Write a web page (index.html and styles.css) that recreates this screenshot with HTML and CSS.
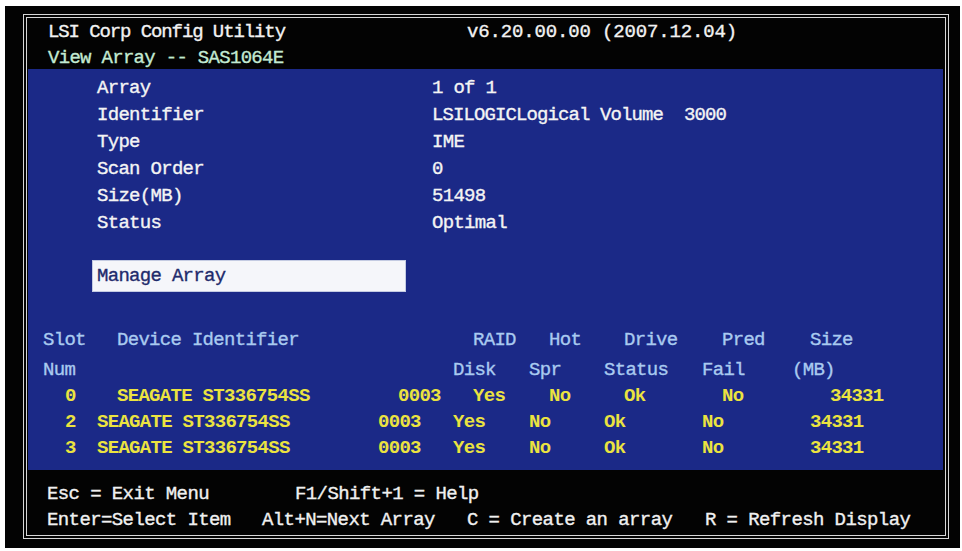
FILE: index.html
```html
<!DOCTYPE html>
<html lang="en">
<head>
  <meta charset="UTF-8">
  <title>LSI Corp Config Utility - View Array</title>
  <link rel="stylesheet" href="styles.css">
</head>
<body>

<div class="screen">
  <div class="frame">

    <div class="head">
      <div class="line">
        <span class="title">LSI Corp Config Utility</span>
        <span class="version">v6.20.00.00 (2007.12.04)</span>
      </div>
      <div class="line sub"><span>View Array -- SAS1064E</span></div>
    </div>

    <div class="panel">
      <div class="info">
        <div class="row"><span class="label">Array</span><span class="value">1 of 1</span></div>
        <div class="row"><span class="label">Identifier</span><span class="value tight">LSILOGICLogical Volume  3000</span></div>
        <div class="row"><span class="label">Type</span><span class="value">IME</span></div>
        <div class="row"><span class="label">Scan Order</span><span class="value">0</span></div>
        <div class="row"><span class="label">Size(MB)</span><span class="value">51498</span></div>
        <div class="row"><span class="label">Status</span><span class="value">Optimal</span></div>
      </div>

      <div class="menu-item">Manage Array</div>

      <div class="devices">
        <div class="trow thead first">
          <span>Slot</span><span class="ind">Device Identifier</span><span></span>
          <span class="ind">RAID</span><span class="ind">Hot</span><span class="ind">Drive</span>
          <span class="ind">Pred</span><span class="sz">Size</span>
        </div>
        <div class="trow thead">
          <span>Num</span><span></span><span></span>
          <span>Disk</span><span>Spr</span><span>Status</span>
          <span>Fail</span><span>(MB)</span>
        </div>
        <div class="trow disk">
          <span class="num">0</span><span class="ind">SEAGATE ST336754SS</span><span class="ind">0003</span>
          <span class="ind">Yes</span><span class="ind">No</span><span class="ind">Ok</span>
          <span class="ind">No</span><span class="sz2">34331</span>
        </div>
        <div class="trow disk">
          <span class="num">2</span><span>SEAGATE ST336754SS</span><span>0003</span>
          <span>Yes</span><span>No</span><span>Ok</span>
          <span>No</span><span class="sz">34331</span>
        </div>
        <div class="trow disk">
          <span class="num">3</span><span>SEAGATE ST336754SS</span><span>0003</span>
          <span>Yes</span><span>No</span><span>Ok</span>
          <span>No</span><span class="sz">34331</span>
        </div>
      </div>
    </div>

    <div class="foot">
      <div class="line">
        <span class="k1">Esc = Exit Menu</span>
        <span>F1/Shift+1 = Help</span>
      </div>
      <div class="line">
        <span class="k2">Enter=Select Item</span>
        <span class="k3">Alt+N=Next Array</span>
        <span class="k4">C = Create an array</span>
        <span>R = Refresh Display</span>
      </div>
    </div>

  </div>
</div>

</body>
</html>
```

FILE: styles.css
```css
body {
  margin: 0;
  background-color: #fff;
  font-family: "Liberation Mono", "DejaVu Sans Mono", monospace;
  font-size: 19px;
  letter-spacing: -0.7px;
  -webkit-text-stroke: 0.35px currentColor;
}

.line span,
.row span,
.trow span,
.menu-item {
  white-space: pre;
}

.screen {
  margin: 6px 0 0 5px;
  width: 955px;
  height: 542px;
  box-sizing: border-box;
  padding: 8px 11px 0 18px;
  background-color: #030303;
}

.frame {
  border: 4px double #d6d6d6;
}

/* black title area */
.head {
  height: 51px;
  box-sizing: border-box;
  padding: 1px 0 0 21px;
  color: #f2f2f2;
}

.line {
  display: flex;
  line-height: 26px;
}

.title {
  width: 419px;
  letter-spacing: -1.1px;
}

.version {
  letter-spacing: -0.15px;
}

.sub {
  color: #c3ead2;
}

/* blue area */
.panel {
  margin: 0 2px 0 1px;
  padding: 6px 0 9px 0;
  background-color: #1b2987;
  color: #f4f4f4;
}

.info {
  padding-left: 69px;
}

.row {
  display: flex;
  line-height: 27px;
}

.label {
  width: 335px;
}

.value.tight {
  letter-spacing: -0.9px;
}

.menu-item {
  margin: 23px 0 0 64px;
  width: 308px;
  line-height: 30px;
  padding-left: 4px;
  background-color: #f5f6fa;
  border: 1px solid #c4cbe2;
  color: #1f2b6c;
}

.devices {
  margin-top: 35px;
  padding-left: 15px;
}

.trow {
  display: grid;
  grid-template-columns: 54px 281px 75px 76px 75px 98px 90px 1fr;
  line-height: 26px;
}

.thead {
  color: #a9caf0;
}

.thead.first {
  margin-bottom: 4px;
}

.disk {
  color: #ebe340;
  font-weight: bold;
  -webkit-text-stroke: 0;
}

.num {
  padding-left: 22px;
}

.ind {
  padding-left: 20px;
}

.sz {
  padding-left: 18px;
}

.sz2 {
  padding-left: 38px;
}

/* key help */
.foot {
  height: 65px;
  box-sizing: border-box;
  padding: 11px 0 0 20px;
  color: #f0f0f0;
  letter-spacing: -0.6px;
}

.k1 {
  width: 248px;
  flex-shrink: 0;
}

.k2 {
  width: 215px;
  flex-shrink: 0;
}

.k3 {
  width: 205px;
  flex-shrink: 0;
}

.k4 {
  width: 238px;
  flex-shrink: 0;
}
```
